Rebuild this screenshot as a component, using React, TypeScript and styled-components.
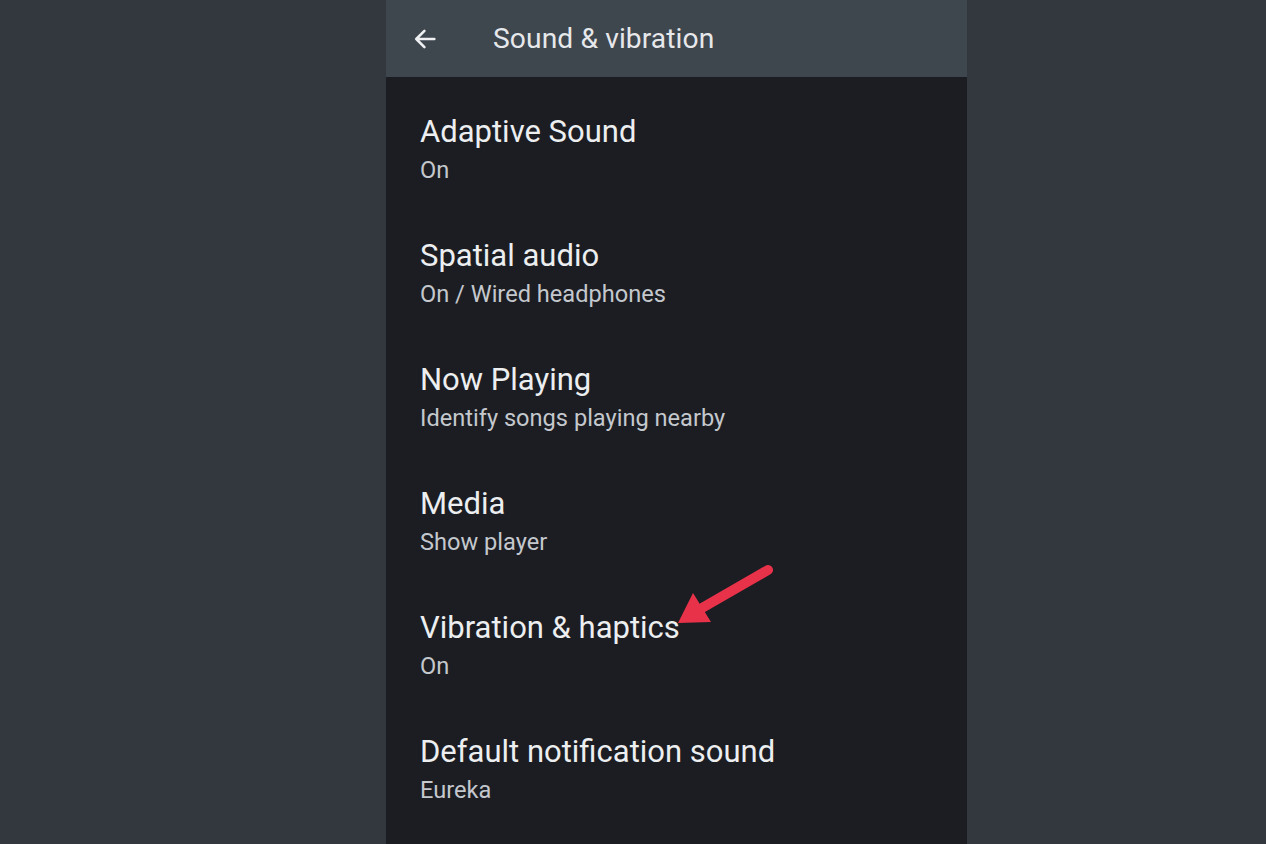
import React from "react";
import styled, { createGlobalStyle } from "styled-components";

interface Setting {
  title: string;
  summary: string;
  marked?: boolean;
}

const settings: Setting[] = [
  { title: "Adaptive Sound", summary: "On" },
  { title: "Spatial audio", summary: "On / Wired headphones" },
  { title: "Now Playing", summary: "Identify songs playing nearby" },
  { title: "Media", summary: "Show player" },
  { title: "Vibration & haptics", summary: "On", marked: true },
  { title: "Default notification sound", summary: "Eureka" },
];

export default function App() {
  return (
    <>
      <GlobalStyle />
      <Page>
        <Phone>
          <TopBar>
            <BackButton aria-label="Back">
              <svg width="28" height="28" viewBox="0 0 24 24">
                <path
                  d="M20 12H4.5M11.5 5L4.5 12l7 7"
                  fill="none"
                  stroke="#eef0f2"
                  strokeWidth="2.2"
                  strokeLinecap="round"
                  strokeLinejoin="round"
                />
              </svg>
            </BackButton>
            <BarTitle>Sound &amp; vibration</BarTitle>
          </TopBar>
          <List>
            {settings.map((item) => (
              <Row key={item.title}>
                <Title>
                  {item.title}
                  {item.marked && (
                    <Pointer viewBox="0 0 100 70" aria-hidden="true">
                      <path
                        d="M92 7L26 45"
                        stroke="#e8324a"
                        strokeWidth="10"
                        strokeLinecap="round"
                      />
                      <path d="M2 60L17 30L35 59Z" fill="#e8324a" />
                    </Pointer>
                  )}
                </Title>
                <Summary>{item.summary}</Summary>
              </Row>
            ))}
          </List>
        </Phone>
      </Page>
    </>
  );
}

const GlobalStyle = createGlobalStyle`
  html, body {
    margin: 0;
    padding: 0;
    background: #33383f;
  }
  body {
    font-family: Roboto, "Noto Sans", sans-serif;
  }
`;

const Page = styled.div`
  display: flex;
  justify-content: flex-start;
  height: 844px;
  overflow: hidden;
  background: #33383f;
  padding-left: 386px;
`;

const Phone = styled.div`
  width: 581px;
  display: flex;
  flex-direction: column;
  background: #1b1d23;
`;

const TopBar = styled.div`
  flex-shrink: 0;
  height: 77px;
  display: flex;
  align-items: center;
  background: #3e464e;
  padding-left: 25px;
  gap: 54px;
`;

const BackButton = styled.div`
  display: flex;
  align-items: center;
  justify-content: center;
  width: 28px;
  height: 28px;
`;

const BarTitle = styled.div`
  font-size: 28.2px;
  color: #e6e8eb;
  letter-spacing: 0.1px;
`;

const List = styled.div`
  display: flex;
  flex-direction: column;
  padding: 36px 0 0 34px;
`;

const Row = styled.div`
  flex-shrink: 0;
  height: 124px;
  display: flex;
  flex-direction: column;
`;

const Title = styled.div`
  position: relative;
  align-self: flex-start;
  font-size: 31px;
  line-height: 38px;
  color: #eceef0;
`;

const Pointer = styled.svg`
  position: absolute;
  left: calc(100% - 4px);
  top: -46px;
  width: 100px;
  height: 70px;
`;

const Summary = styled.div`
  margin-top: 4px;
  font-size: 23.6px;
  line-height: 30px;
  color: #c4c8cd;
`;
